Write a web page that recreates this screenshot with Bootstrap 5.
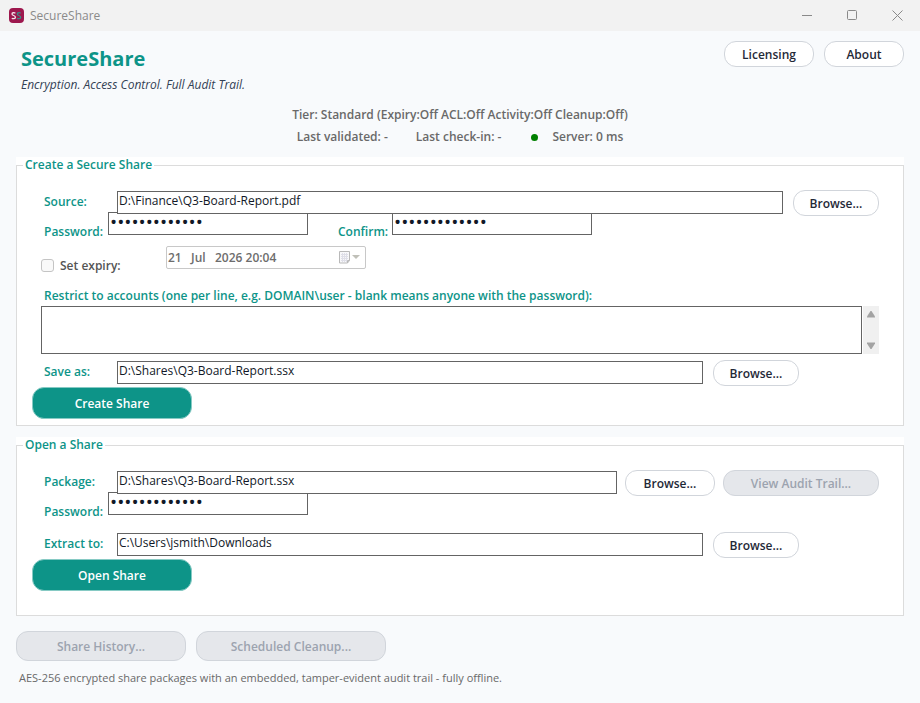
<!DOCTYPE html>
<html lang="en">
<head>
    <meta charset="UTF-8">
    <meta name="viewport" content="width=device-width, initial-scale=1.0">
    <title>SecureShare</title>
    <link href="https://cdn.jsdelivr.net/npm/bootstrap@5.3.0/dist/css/bootstrap.min.css" rel="stylesheet">
    <style>
        body {
            font-family: 'Open Sans', 'Noto Sans', sans-serif;
            font-size: 12px;
            line-height: 16px;
            color: #1e293b;
            background: #f8fafc;
        }
        .title-bar { height: 31px; padding: 0 12px 0 9px; background: #f2f2f2; color: #8a8a8a; }
        .title-text { gap: 6px; }
        .win-btn { width: 22px; height: 22px; color: #8a8a8a; }
        .win-btns { gap: 23px; }

        .app-header { padding: 10px 16px 0 21px; }
        .app-name { font-size: 20px; line-height: 24px; font-weight: 700; color: #0d9488; margin: 6px 0; }
        .tagline { color: #334155; font-style: italic; }
        .top-btns, .foot-btns { gap: 10px; }

        .status-area { margin-top: 14px; color: #696969; font-weight: 600; }
        .status-line { margin-top: 6px; }
        .check-in { margin: 0 30px 0 28px; }
        .server-dot { width: 7px; height: 7px; margin-right: 14px; background: #008000; }

        /* Buttons */
        .btn-app {
            height: 26px;
            padding: 2px 0 0;
            font-size: 12px;
            line-height: 16px;
            font-weight: 600;
            border: 1px solid #d1d5db;
            border-radius: 12px;
            background: #fff;
            color: #1f2937;
            flex: none;
        }
        .btn-app:disabled { background: #e5e7eb; border-color: #d1d5db; color: #9ca3af; opacity: 1; }
        .btn-main { height: 32px; width: 160px; margin-top: 1px; background: #0d9488; border-color: #86cac4; color: #fff; }
        .btn-foot { height: 30px; }
        .w-80 { width: 80px; }
        .w-86 { width: 86px; }
        .w-90 { width: 90px; }
        .w-156 { width: 156px; }
        .w-170 { width: 170px; }
        .w-190 { width: 190px; }
        .browse { margin-left: 10px; }

        /* Groups */
        .group { margin: 0 16px 11px; background: #fff; }
        .group-first { margin-top: 12px; }
        .group fieldset { border: 1px solid #dcdcdc; }
        .group legend { margin: 0 0 0 6px; padding: 0 2px; font-size: 12px; line-height: 16px; font-weight: 600; color: #0d9488; }
        .group-body { padding: 17px 24px 6px 15px; }
        .group-body-tall { padding-bottom: 24px; }
        .form-line { padding-left: 12px; }
        .teal-label { color: #0d9488; font-weight: 600; flex: none; }
        .path-label { width: 73px; padding-top: 4px; }
        .pass-label { width: 64px; padding-top: 12px; }
        .confirm-label { width: 54px; padding-top: 12px; margin-left: 30px; }

        .box {
            height: 23px;
            min-width: 0;
            padding: 0 1px 4px;
            border: 1px solid #646464;
            border-radius: 0;
            background: #fff;
            color: #111827;
            line-height: 16px;
        }
        /* path fields lie over the top edge of the password fields */
        .path-line { position: relative; z-index: 1; }
        .path-line .box { margin-top: 1px; }
        .pass-line { margin-top: -4px; height: 27px; }
        .pass-box { width: 200px; font-size: 19px; }
        .save-line { margin-top: 6px; }
        .extract-line { margin-top: 13px; }
        .short-path { margin-right: 80px; }
        .accounts-label { margin-top: 14px; }
        .accounts-line { margin-top: 2px; padding-left: 9px; }
        .accounts { height: 48px; resize: none; }
        .scroll-track { width: 16px; margin-left: 1px; background: #f0f0f0; padding: 5px 0; }

        .check-line { padding-left: 9px; margin-top: 7px; }
        .tick { appearance: none; width: 13px; height: 13px; margin: 13px 6px 0 0; border: 1px solid #c4c4c4; border-radius: 3px; background: #f9f9f9; }
        .tick:checked { background: #0d9488; }
        .tick-label { width: 106px; padding-top: 12px; color: #555; font-weight: 600; }
        .date-box { width: 200px; height: 23px; border: 1px solid #c8c8c8; border-radius: 2px; background: #fff; }
        .date-box input { min-width: 0; border: 0; padding: 0 0 0 1px; background: transparent; color: #6d6d6d; font-weight: 600; line-height: 16px; }
        .date-box button { border: 0; background: transparent; padding: 0 5px 0 0; }

        .foot-btns { margin: 15px 16px 0; }
        .foot-note { margin: 9px 19px 0; font-size: 11px; color: #696969; }
    </style>
</head>
<body>
    <div class="title-bar d-flex align-items-center justify-content-between">
        <div class="title-text d-flex align-items-center">
            <svg width="15" height="15" viewBox="0 0 15 15" aria-hidden="true">
                <rect width="15" height="15" rx="4" fill="#9d174d"/>
                <path d="M6.4 5.2C5.4 4.5 3 4.4 3 6c0 1.7 3.4 1.3 3.4 3.2 0 1.8-2.6 1.7-3.6 1" fill="none" stroke="#f3e3ea" stroke-width="1.3"/>
                <path d="M11.7 5.2c-1-.7-3.4-.8-3.4.8 0 1.7 3.4 1.3 3.4 3.2 0 1.8-2.6 1.7-3.6 1" fill="none" stroke="#3f8a86" stroke-width="1.3"/>
            </svg>
            <span>SecureShare</span>
        </div>
        <div class="win-btns d-flex">
            <button type="button" class="win-btn btn p-0 border-0 d-flex align-items-center justify-content-center" aria-label="Minimize">
                <svg width="11" height="11" fill="none" stroke="currentColor"><path d="M0 5.5h10"/></svg>
            </button>
            <button type="button" class="win-btn btn p-0 border-0 d-flex align-items-center justify-content-center" aria-label="Maximize">
                <svg width="11" height="11" fill="none" stroke="currentColor"><rect x=".5" y=".5" width="9" height="9" rx="1"/></svg>
            </button>
            <button type="button" class="win-btn btn p-0 border-0 d-flex align-items-center justify-content-center" aria-label="Close">
                <svg width="11" height="11" fill="none" stroke="currentColor"><path d="M.5.5l10 10M10.5.5l-10 10"/></svg>
            </button>
        </div>
    </div>

    <header class="app-header d-flex justify-content-between align-items-start">
        <div>
            <h1 class="app-name">SecureShare</h1>
            <div class="tagline">Encryption. Access Control. Full Audit Trail.</div>
        </div>
        <div class="top-btns d-flex">
            <button type="button" class="btn btn-app w-90">Licensing</button>
            <button type="button" class="btn btn-app w-80">About</button>
        </div>
    </header>

    <div class="status-area d-flex flex-column align-items-center">
        <div>Tier: Standard (Expiry:Off ACL:Off Activity:Off Cleanup:Off)</div>
        <div class="status-line d-flex align-items-center">
            <span>Last validated: -</span>
            <span class="check-in">Last check-in: -</span>
            <span class="server-dot rounded-circle"></span>
            <span>Server: 0 ms</span>
        </div>
    </div>

    <form class="group group-first">
        <fieldset>
            <legend class="float-none w-auto">Create a Secure Share</legend>
            <div class="group-body">
                <div class="form-line path-line d-flex align-items-start">
                    <label for="source" class="teal-label path-label">Source:</label>
                    <input type="text" id="source" class="box flex-grow-1" value="D:\Finance\Q3-Board-Report.pdf">
                    <button type="button" class="btn btn-app w-86 browse">Browse...</button>
                </div>
                <div class="form-line pass-line d-flex align-items-start">
                    <label for="password" class="teal-label pass-label">Password:</label>
                    <input type="password" id="password" class="box pass-box" value="Board-Q3-2026">
                    <label for="confirm" class="teal-label confirm-label">Confirm:</label>
                    <input type="password" id="confirm" class="box pass-box" value="Board-Q3-2026">
                </div>
                <div class="check-line d-flex align-items-start">
                    <input type="checkbox" id="expiry" class="tick">
                    <label for="expiry" class="tick-label">Set expiry:</label>
                    <div class="date-box d-flex align-items-center">
                        <input type="text" class="flex-grow-1" aria-label="Expiry date" value="21  &nbsp;Jul  &nbsp;2026 20:04" disabled>
                        <button type="button" class="d-flex align-items-center" aria-label="Open calendar" disabled>
                            <svg width="21" height="13" viewBox="0 0 21 13">
                                <path d="M.5.5h10v9l-2 2.5h-8z" fill="#f8f8fa" stroke="#b9b9b9"/>
                                <path d="M2 3.5h7M2 5.5h7M2 7.5h7M2 9.5h6M3.5 2v9M5.5 2v9M7.5 2v9" stroke="#dfdfe8" fill="none"/>
                                <path d="M8.5 12V9.500h2" fill="none" stroke="#b9b9b9"/>
                                <path d="M13 4h8l-4 4z" fill="#c0c0b8"/>
                            </svg>
                        </button>
                    </div>
                </div>
                <div class="form-line accounts-label">
                    <label for="accounts" class="teal-label d-block">Restrict to accounts (one per line, e.g. DOMAIN\user - blank means anyone with the password):</label>
                </div>
                <div class="accounts-line d-flex">
                    <textarea id="accounts" class="box accounts flex-grow-1"></textarea>
                    <div class="scroll-track d-flex flex-column align-items-center justify-content-between">
                        <svg width="8" height="7"><path d="M0 6.5V5.5L3.5 0h1L8 5.5v1z" fill="#a3a3a3"/></svg>
                        <svg width="8" height="7"><path d="M0 .5v1L3.5 7h1L8 1.5v-1z" fill="#a3a3a3"/></svg>
                    </div>
                </div>
                <div class="form-line path-line save-line d-flex align-items-start">
                    <label for="save-as" class="teal-label path-label">Save as:</label>
                    <input type="text" id="save-as" class="box flex-grow-1" value="D:\Shares\Q3-Board-Report.ssx">
                    <button type="button" class="btn btn-app w-86 browse short-path">Browse...</button>
                </div>
                <button type="button" class="btn btn-app btn-main d-block">Create Share</button>
            </div>
        </fieldset>
    </form>

    <form class="group">
        <fieldset>
            <legend class="float-none w-auto">Open a Share</legend>
            <div class="group-body group-body-tall">
                <div class="form-line path-line d-flex align-items-start">
                    <label for="package" class="teal-label path-label">Package:</label>
                    <input type="text" id="package" class="box flex-grow-1" value="D:\Shares\Q3-Board-Report.ssx">
                    <button type="button" class="btn btn-app w-90 ms-2">Browse...</button>
                    <button type="button" class="btn btn-app w-156 ms-2" disabled>View Audit Trail...</button>
                </div>
                <div class="form-line pass-line d-flex align-items-start">
                    <label for="open-password" class="teal-label pass-label">Password:</label>
                    <input type="password" id="open-password" class="box pass-box" value="Board-Q3-2026">
                </div>
                <div class="form-line path-line extract-line d-flex align-items-start">
                    <label for="extract-to" class="teal-label path-label">Extract to:</label>
                    <input type="text" id="extract-to" class="box flex-grow-1" value="C:\Users\jsmith\Downloads">
                    <button type="button" class="btn btn-app w-86 browse short-path">Browse...</button>
                </div>
                <button type="button" class="btn btn-app btn-main d-block">Open Share</button>
            </div>
        </fieldset>
    </form>

    <footer>
        <div class="foot-btns d-flex">
            <button type="button" class="btn btn-app btn-foot w-170" disabled>Share History...</button>
            <button type="button" class="btn btn-app btn-foot w-190" disabled>Scheduled Cleanup...</button>
        </div>
        <p class="foot-note">AES-256 encrypted share packages with an embedded, tamper-evident audit trail - fully offline.</p>
    </footer>

    <script src="https://cdn.jsdelivr.net/npm/bootstrap@5.3.0/dist/js/bootstrap.bundle.min.js"></script>
</body>
</html>
